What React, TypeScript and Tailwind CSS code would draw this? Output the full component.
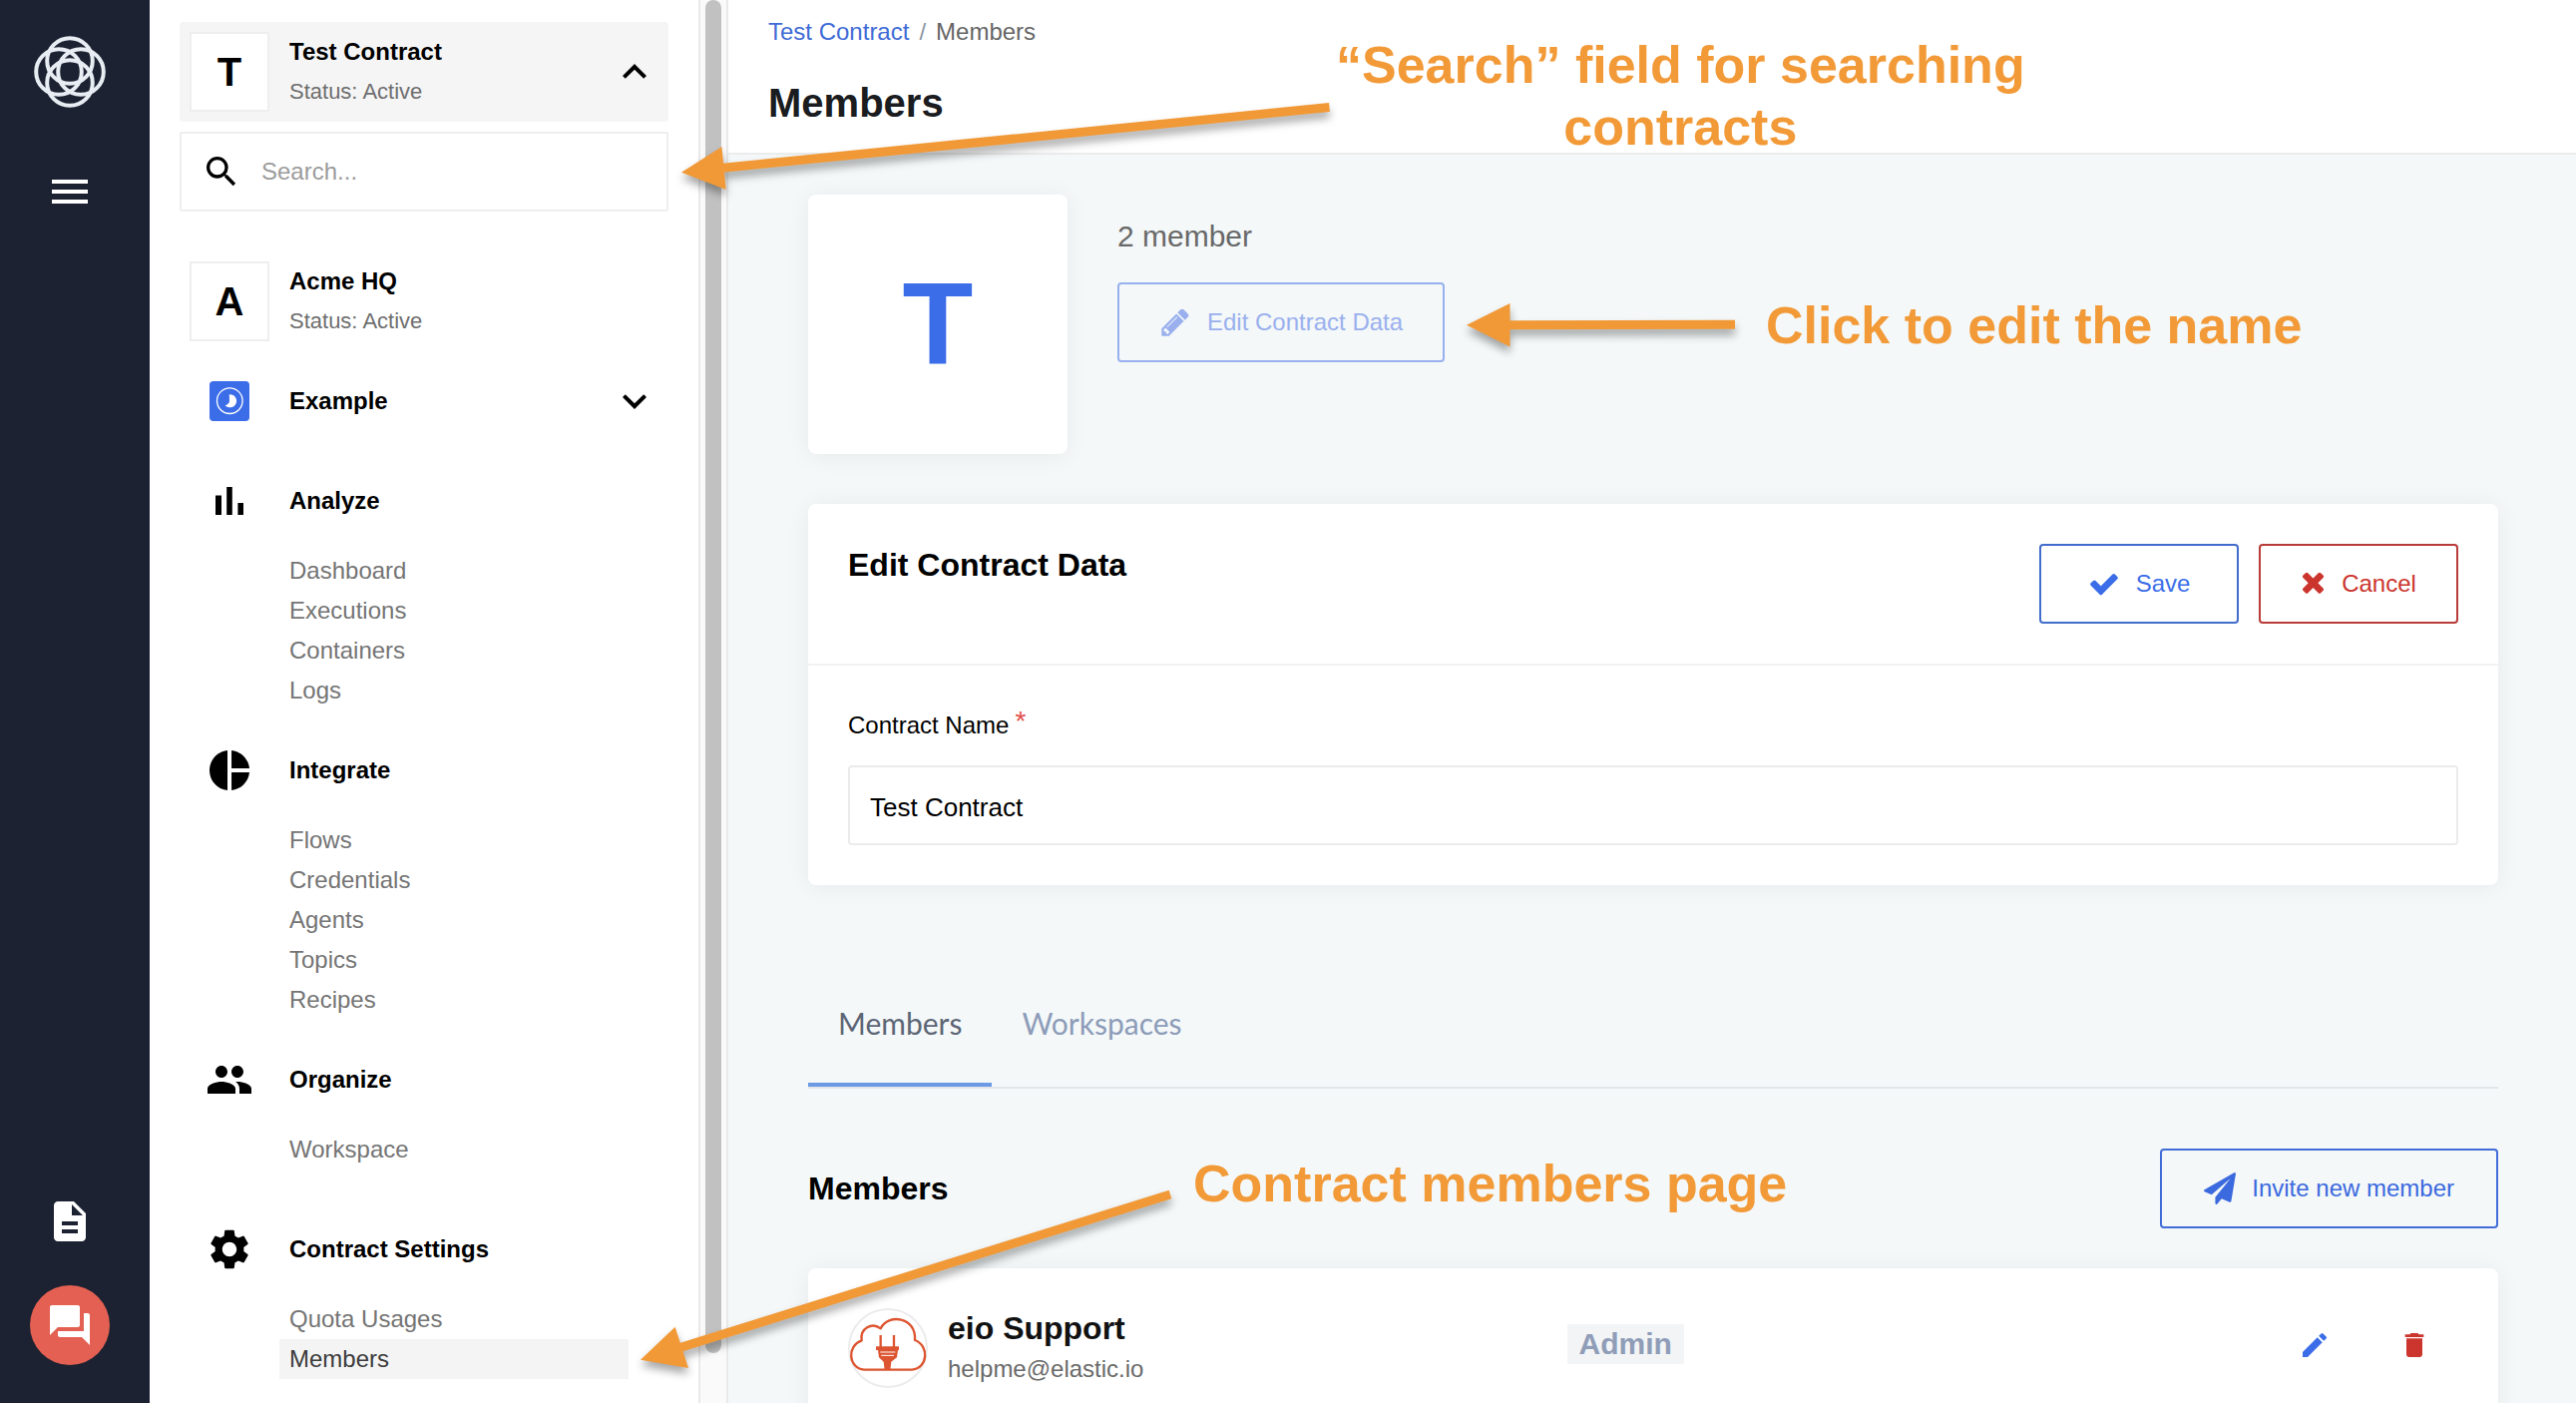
import type { ReactNode } from "react";
import {
  MdDelete,
  MdDescription,
  MdEdit,
  MdExpandLess,
  MdExpandMore,
  MdMenu,
  MdPeople,
  MdPieChart,
  MdQuestionAnswer,
  MdSearch,
  MdSettings,
} from "react-icons/md";

/* ---------- Icons ---------- */

function BrandLogo() {
  return (
    <svg viewBox="0 0 72 72" className="size-[72px]" fill="none" stroke="#e8ecf3" strokeWidth="4" aria-hidden="true">
      <circle cx="36" cy="25" r="22.800" />
      <circle cx="36" cy="47" r="22.800" />
      <circle cx="25" cy="36" r="22.800" />
      <circle cx="47" cy="36" r="22.800" />
    </svg>
  );
}

function BarsIcon() {
  return (
    <svg viewBox="0 0 24 24" className="size-12" fill="currentColor" aria-hidden="true">
      <path d="M5 9.2h3V19H5zM10.6 5h2.8v14h-2.8zm5.6 8H19v6h-2.8z" />
    </svg>
  );
}

function WorkspaceIcon() {
  return (
    <svg viewBox="0 0 40 40" className="size-10" aria-hidden="true">
      <rect width="40" height="40" rx="4" fill="#3b6de8" />
      <circle cx="20.3" cy="19.7" r="12.8" fill="none" stroke="#fff" strokeWidth="1.3" />
      <path d="M19.8 13.2a6.6 6.6 0 1 1-4 11.2c2.400-1.200 4.200-2.600 4.200-4.700z" fill="#fff" />
    </svg>
  );
}

function PencilIcon() {
  return (
    <svg viewBox="0 0 1792 1792" className="size-8" fill="currentColor" aria-hidden="true">
      <path d="M491 1536l91-91-235-235-91 91v107h128v128h107zm523-928q0-22-22-22-10 0-17 7l-542 542q-7 7-7 17 0 22 22 22 10 0 17-7l542-542q7-7 7-17zm-54-192l416 416-832 832h-416v-416zm683 96q0 53-37 90l-166 166-416-416 166-165q36-38 90-38 53 0 91 38l235 234q37 39 37 91z" />
    </svg>
  );
}

function CheckIcon() {
  return (
    <svg viewBox="0 0 1792 1792" className="size-8" fill="currentColor" aria-hidden="true">
      <path d="M1671 566q0 40-28 68l-724 724-136 136q-28 28-68 28t-68-28l-136-136-362-362q-28-28-28-68t28-68l136-136q28-28 68-28t68 28l294 295 656-657q28-28 68-28t68 28l136 136q28 28 28 68z" />
    </svg>
  );
}

function CrossIcon() {
  return (
    <svg viewBox="0 0 1408 1792" className="h-8 w-[25px]" fill="currentColor" aria-hidden="true">
      <path d="M1298 1214q0 40-28 68l-136 136q-28 28-68 28t-68-28l-294-294-294 294q-28 28-68 28t-68-28l-136-136q-28-28-28-68t28-68l294-294-294-294q-28-28-28-68t28-68l136-136q28-28 68-28t68 28l294 294 294-294q28-28 68-28t68 28l136 136q28 28 28 68t-28 68l-294 294 294 294q28 28 28 68z" />
    </svg>
  );
}

function PlaneIcon() {
  return (
    <svg viewBox="0 0 1792 1792" className="size-8" fill="currentColor" aria-hidden="true">
      <path d="M1764 11q33 24 27 64l-256 1536q-5 29-32 45-14 8-31 8-11 0-24-5l-453-185-242 295q-18 23-49 23-13 0-22-4-19-7-30.5-23.500t-11.500-36.500v-349l864-1059-1069 925-395-162q-37-14-40-55-2-40 32-59l1664-960q15-9 32-9 20 0 36 11z" />
    </svg>
  );
}

function CloudPlugAvatar() {
  return (
    <svg viewBox="30 33 240 240" className="size-20 shrink-0" aria-hidden="true">
      <circle cx="150" cy="153" r="117" fill="#fff" stroke="#ececec" strokeWidth="6" />
      <path
        d="M78 218C30 212 26 146 71 130C65 94 102 74 128 94C150 48 236 58 231 129C276 146 270 214 222 218Z"
        fill="none"
        stroke="#dd5530"
        strokeWidth="7"
        strokeLinejoin="round"
      />
      <path d="M128 114v36M168 114v36" stroke="#dd5530" strokeWidth="7" />
      <path d="M114 148h69v11h-3l-3 22-17 13-3 25h-17l-3-25-14-13-3-22h-6z" fill="#dd5530" />
      <path d="M127 165h45M130 175h38" stroke="#fff" strokeWidth="3" />
    </svg>
  );
}

/* ---------- Sidebar ---------- */

function ContractLabel({ letter, name }: { letter: string; name: string }) {
  return (
    <>
      <span className="flex size-20 shrink-0 items-center justify-center border-2 border-[#eeeeee] bg-white text-[40px] font-bold">
        {letter}
      </span>
      <span className="flex flex-1 flex-col text-left leading-10">
        <span className="text-2xl leading-10 font-bold">{name}</span>
        <span className="text-[22px] leading-10 text-[#6f6f6f]">Status: Active</span>
      </span>
    </>
  );
}

type Section = { title: string; icon: ReactNode; items: string[]; gap: string };

const sections: Section[] = [
  { title: "Analyze", icon: <BarsIcon />, items: ["Dashboard", "Executions", "Containers", "Logs"], gap: "mt-[60px]" },
  {
    title: "Integrate",
    icon: <MdPieChart className="size-12" />,
    items: ["Flows", "Credentials", "Agents", "Topics", "Recipes"],
    gap: "mt-10",
  },
  { title: "Organize", icon: <MdPeople className="size-12" />, items: ["Workspace"], gap: "mt-10" },
  {
    title: "Contract Settings",
    icon: <MdSettings className="size-12" />,
    items: ["Quota Usages", "Members"],
    gap: "mt-[60px]",
  },
];

function NavSection({ title, icon, items, gap }: Section) {
  return (
    <section className={gap}>
      <h2 className="flex h-10 items-center gap-5 px-2.5 text-2xl font-bold">
        <span className="flex w-20 justify-center">{icon}</span>
        {title}
      </h2>
      <ul className="mt-[30px] mr-10 ml-[100px] text-2xl">
        {items.map((item) => {
          const active = item === "Members";
          return (
            <li key={item}>
              <a
                href="#"
                aria-current={active ? "page" : undefined}
                className={
                  active
                    ? "block bg-[#f4f4f4] px-2.5 leading-10 text-[#3c3c3c]"
                    : "block px-2.5 leading-10 text-[#757575]"
                }
              >
                {item}
              </a>
            </li>
          );
        })}
      </ul>
    </section>
  );
}

function Rail() {
  return (
    <aside className="flex w-[150px] shrink-0 flex-col items-center bg-[#1c2231] pt-9 pb-[34px] pr-2.5 text-white">
      <a href="#" aria-label="Home">
        <BrandLogo />
      </a>
      <button type="button" aria-label="Menu" className="mt-[60px]">
        <MdMenu className="size-12" />
      </button>
      <a href="#" aria-label="Documentation" className="mt-auto">
        <MdDescription className="size-12" />
      </a>
      <button
        type="button"
        aria-label="Chat"
        className="mt-10 mb-1 flex size-20 items-center justify-center rounded-full bg-[#e36052]"
      >
        <MdQuestionAnswer className="size-12" />
      </button>
    </aside>
  );
}

function Sidebar() {
  return (
    <nav className="w-[550px] shrink-0 overflow-hidden bg-white px-[30px] pt-[22px] text-black">
      <button type="button" className="flex h-[100px] w-full items-center gap-5 rounded bg-[#f5f5f5] px-2.5">
        <ContractLabel letter="T" name="Test Contract" />
        <MdExpandLess className="size-12" />
      </button>
      <label className="mt-2.5 flex h-20 items-center gap-5 rounded-xs border-2 border-[#eeeeee] px-5">
        <MdSearch className="size-10 shrink-0" />
        <input
          type="search"
          aria-label="Search contracts"
          placeholder="Search..."
          className="min-w-0 flex-1 bg-transparent text-2xl outline-none placeholder:text-[#9c9c9c]"
        />
      </label>
      <button type="button" className="mt-[50px] flex w-full items-center gap-5 px-2.5">
        <ContractLabel letter="A" name="Acme HQ" />
      </button>
      <button type="button" className="mt-10 flex h-10 w-full items-center gap-5 px-2.5 text-2xl font-bold">
        <span className="flex w-20 justify-center">
          <WorkspaceIcon />
        </span>
        <span className="flex-1 text-left">Example</span>
        <MdExpandMore className="size-12" />
      </button>
      {sections.map((section) => (
        <NavSection key={section.title} {...section} />
      ))}
    </nav>
  );
}

function ScrollTrack() {
  return (
    <div className="flex w-[30px] shrink-0 flex-col items-center border-x-2 border-[#e9e9e9] bg-[#fafafa]" aria-hidden="true">
      <div className="w-4 flex-[27] rounded-full bg-[#c1c1c1]" />
      <div className="flex-1" />
    </div>
  );
}

/* ---------- Main content ---------- */

const buttonBase = "flex h-20 shrink-0 items-center justify-center gap-4 rounded border-2 text-2xl";
const card = "rounded-lg bg-white shadow-[0_2px_24px_rgba(0,0,0,0.06)]";

function ContractSummary() {
  return (
    <section className="flex gap-[50px]">
      <div className={`${card} flex size-[260px] items-center justify-center text-[116px] leading-none font-bold text-[#3b6de8]`}>
        T
      </div>
      <div className="flex flex-col items-start pt-5">
        <p className="text-3xl leading-11 text-[#696969]">2 member</p>
        <button type="button" className={`${buttonBase} mt-6 border-[#97b1ee] px-10 text-[#9ab0ee]`}>
          <PencilIcon />
          Edit Contract Data
        </button>
      </div>
    </section>
  );
}

function EditContractForm() {
  return (
    <form className={`${card} mt-[50px]`} onSubmit={(event) => event.preventDefault()}>
      <div className="flex items-start justify-between border-b-2 border-[#f1f2f2] p-10">
        <h2 className="text-[32px] leading-[42px] font-bold text-black">Edit Contract Data</h2>
        <div className="flex gap-5">
          <button type="submit" className={`${buttonBase} min-w-[200px] border-[#426dcb] text-[#3b6de8]`}>
            <CheckIcon />
            Save
          </button>
          <button type="button" className={`${buttonBase} min-w-[200px] border-[#b83c38] text-[#cb352e]`}>
            <CrossIcon />
            Cancel
          </button>
        </div>
      </div>
      <div className="p-10">
        <label htmlFor="contract-name" className="flex gap-1.5 text-2xl leading-10 text-black">
          Contract Name
          <span className="text-[28px] leading-8 text-[#e2504a]">*</span>
        </label>
        <input
          id="contract-name"
          type="text"
          required
          defaultValue="Test Contract"
          className="mt-5 block h-20 w-full rounded border-2 border-[#ebebeb] bg-white px-5 pt-1 text-[26px] text-black outline-none"
        />
      </div>
    </form>
  );
}

function Tabs() {
  return (
    <div role="tablist" className="mt-20 flex border-b-2 border-[#e3e5e8] font-[Lato,sans-serif] text-3xl">
      <button
        type="button"
        role="tab"
        aria-selected="true"
        className="h-[122px] border-b-4 border-[#6c9ae5] px-[30px] pb-0.5 text-[#5d6675]"
      >
        Members
      </button>
      <button
        type="button"
        role="tab"
        aria-selected="false"
        className="h-[122px] border-b-4 border-transparent px-[30px] pb-0.5 text-[#8d9cb8]"
      >
        Workspaces
      </button>
    </div>
  );
}

function MembersList() {
  return (
    <section>
      <div className="mt-[60px] flex items-center justify-between">
        <h2 className="text-[32px] font-bold text-black">Members</h2>
        <button type="button" className={`${buttonBase} border-[#426dd8] px-[42px] text-[#3b69de]`}>
          <PlaneIcon />
          Invite new member
        </button>
      </div>
      <ul className={`${card} mt-10 p-10`}>
        <li className="grid grid-cols-[25fr_31fr]">
          <div className="flex gap-5">
            <CloudPlugAvatar />
            <div>
              <p className="text-[32px] leading-10 font-bold text-[#111111]">eio Support</p>
              <p className="text-2xl leading-[42px] text-[#6a6a6a]">helpme@elastic.io</p>
            </div>
          </div>
          <div className="flex items-start justify-between">
            <span className="mt-4 bg-[#f2f4f5] px-3 text-3xl leading-10 font-bold text-[#8f9db8]">Admin</span>
            <div className="flex gap-3">
              <button
                type="button"
                aria-label="Edit member"
                className="flex h-[74px] w-[88px] items-center justify-center text-[#3b6de8]"
              >
                <MdEdit className="size-8" />
              </button>
              <button
                type="button"
                aria-label="Remove member"
                className="flex h-[74px] w-[88px] items-center justify-center text-[#cb352e]"
              >
                <MdDelete className="size-8" />
              </button>
            </div>
          </div>
        </li>
      </ul>
    </section>
  );
}

/* ---------- Callouts drawn over the page ---------- */

function Arrow({ shaft, head }: { shaft: string; head: string }) {
  return (
    <g className="drop-shadow-[0_6px_4px_rgba(0,0,0,0.35)]">
      <path d={shaft} stroke="#f19937" strokeWidth="9" />
      <path d={head} fill="#f19937" />
    </g>
  );
}

function Callouts() {
  return (
    <div className="pointer-events-none absolute inset-0 text-[52px] leading-[62px] font-bold whitespace-nowrap text-[#f29a38]">
      <svg className="absolute inset-0 size-full" fill="none" aria-hidden="true">
        <Arrow shaft="M1332.500 107.500L722 168.500" head="M683 172.700L723.500 147L727.700 190Z" />
        <Arrow shaft="M1739 325.300L1510 325.700" head="M1470 325.700L1513.500 304V347.500Z" />
        <Arrow shaft="M1173 1197L680 1351" head="M642 1362.700L676.700 1329.700L690 1371Z" />
      </svg>
      <p className="absolute top-[34px] left-[1339px] text-center">
        “Search” field for searching
        <br />
        contracts
      </p>
      <p className="absolute top-[295px] left-[1770px]">Click to edit the name</p>
      <p className="absolute top-[1155px] left-[1196px]">Contract members page</p>
    </div>
  );
}

export default function App() {
  return (
    <div className="relative flex h-screen overflow-hidden bg-[#f4f8f9] font-['Liberation_Sans',Arial,sans-serif]">
      <Rail />
      <Sidebar />
      <ScrollTrack />
      <main className="min-w-0 flex-1 overflow-hidden">
        <header className="border-b-2 border-[#ebecec] bg-white px-10 pt-3 pb-5">
          <nav aria-label="Breadcrumb" className="flex gap-2.5 text-2xl leading-10">
            <a href="#" className="text-[#3f6bd6]">
              Test Contract
            </a>
            <span className="text-[#8e96a3]">/</span>
            <span className="text-[#666666]">Members</span>
          </nav>
          <h1 className="mt-[21px] text-[40px] leading-[60px] font-bold text-[#1a1c20]">Members</h1>
        </header>
        <div className="py-10 pr-[78px] pl-20">
          <ContractSummary />
          <EditContractForm />
          <Tabs />
          <MembersList />
        </div>
      </main>
      <Callouts />
    </div>
  );
}
